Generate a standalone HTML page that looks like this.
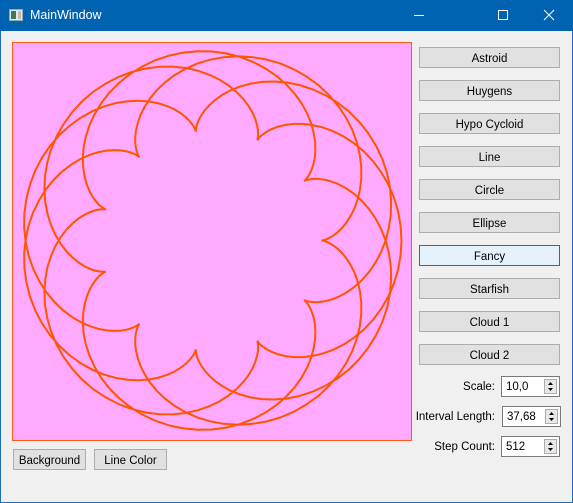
<!DOCTYPE html>
<html><head><meta charset="utf-8"><style>
*{box-sizing:border-box;margin:0;padding:0}
body{width:573px;height:503px;overflow:hidden;background:#f0f0f0;font-family:"Liberation Sans",sans-serif;font-size:12px;color:#000;position:relative}
.win{position:absolute;left:0;top:0;width:573px;height:503px;border:1px solid #1a6fc1;border-top:none}
.title{position:absolute;left:0;top:0;width:573px;height:31px;background:#0063b1;color:#fff;font-size:12px}
.title .t{position:absolute;left:30px;top:8px;font-size:12.5px}
.btn{position:absolute;background:#e1e1e1;border:1px solid #adadad;text-align:center;line-height:20px;padding-top:1px;font-size:11.5px}
.sel{background:#e5f1fb;border-color:#0078d7}
.lbl{position:absolute;text-align:right;width:200px;font-size:11.5px}
.spin{position:absolute;width:59px;height:21px;background:#fff;border:1px solid #7a7a7a;font-size:11.5px;padding-left:4px;line-height:20px}
.spin svg{position:absolute;right:2px;top:2px}
</style></head><body>
<div class="win"></div>
<div class="title">
<svg style="position:absolute;left:9px;top:9px" width="14" height="12"><rect x="0.5" y="0.5" width="13" height="11" fill="#e8e8e8" stroke="#9aa"/><rect x="2" y="2" width="5" height="8" fill="#3a7a5a"/><rect x="9" y="2" width="3" height="8" fill="#bbb"/></svg>
<span class="t">MainWindow</span>
<svg style="position:absolute;left:410px;top:0" width="163" height="31" stroke="#fff" stroke-width="1" fill="none">
<line x1="4" y1="15.5" x2="14" y2="15.5"/><rect x="88.5" y="10.5" width="9" height="9"/><line x1="134" y1="10" x2="144" y2="20"/><line x1="144" y1="10" x2="134" y2="20"/></svg>
</div>
<svg style="position:absolute;left:12px;top:42px" width="400" height="399">
<rect x="0.5" y="0.5" width="399" height="398" fill="#ffaaff" stroke="#ff5a1e"/>
<path id="c" fill="none" stroke="#ff5500" stroke-width="2"/>
</svg>
<script>
(function(){var a=150,b=40,k=3.75,cx=199.5,cy=198.5,N=512,T=8*Math.PI,d="";
for(var i=0;i<=N;i++){var t=T*i/N;var x=a*Math.cos(t)-b*Math.cos(k*t),y=a*Math.sin(t)-b*Math.sin(k*t);d+=(i?"L":"M")+(cx+x).toFixed(1)+" "+(cy+y).toFixed(1);}
document.getElementById("c").setAttribute("d",d);})();
</script>
<div class="btn" style="left:419px;top:47px;width:141px;height:21px">Astroid</div>
<div class="btn" style="left:419px;top:80px;width:141px;height:21px">Huygens</div>
<div class="btn" style="left:419px;top:113px;width:141px;height:21px">Hypo Cycloid</div>
<div class="btn" style="left:419px;top:146px;width:141px;height:21px">Line</div>
<div class="btn" style="left:419px;top:179px;width:141px;height:21px">Circle</div>
<div class="btn" style="left:419px;top:212px;width:141px;height:21px">Ellipse</div>
<div class="btn sel" style="left:419px;top:245px;width:141px;height:21px">Fancy</div>
<div class="btn" style="left:419px;top:278px;width:141px;height:21px">Starfish</div>
<div class="btn" style="left:419px;top:311px;width:141px;height:21px">Cloud 1</div>
<div class="btn" style="left:419px;top:344px;width:141px;height:21px">Cloud 2</div>
<div class="lbl" style="left:295px;top:381px">Scale:</div>
<div class="spin" style="left:501px;top:376px">10,0<svg width="13" height="15"><rect x="0.5" y="0.5" width="12" height="14" fill="#e8e8e8" stroke="#adadad"/><path d="M4 6h5l-2.5-3z M4 9h5l-2.5 3z" fill="#000"/></svg></div>
<div class="lbl" style="left:295px;top:411px">Interval Length:</div>
<div class="spin" style="left:502px;top:406px">37,68<svg width="13" height="15"><rect x="0.5" y="0.5" width="12" height="14" fill="#e8e8e8" stroke="#adadad"/><path d="M4 6h5l-2.5-3z M4 9h5l-2.5 3z" fill="#000"/></svg></div>
<div class="lbl" style="left:295px;top:441px">Step Count:</div>
<div class="spin" style="left:501px;top:436px">512<svg width="13" height="15"><rect x="0.5" y="0.5" width="12" height="14" fill="#e8e8e8" stroke="#adadad"/><path d="M4 6h5l-2.5-3z M4 9h5l-2.5 3z" fill="#000"/></svg></div>
<div class="btn" style="left:13px;top:449px;width:73px;height:21px">Background</div>
<div class="btn" style="left:94px;top:449px;width:73px;height:21px">Line Color</div>
</body></html>
